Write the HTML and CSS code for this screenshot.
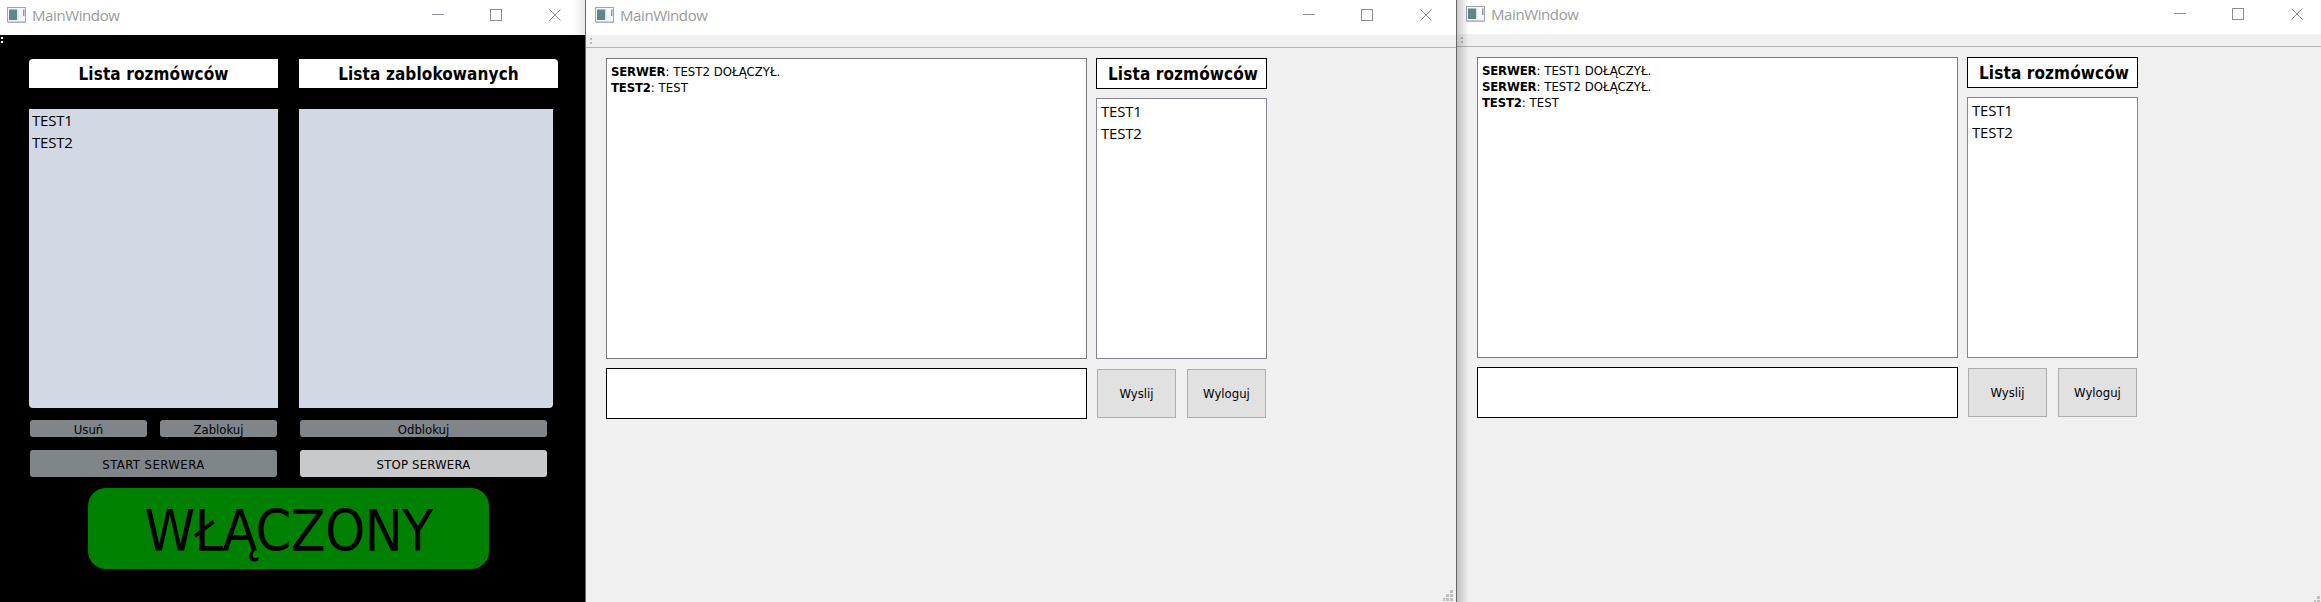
FILE: index.html
```html
<!DOCTYPE html>
<html lang="pl">
<head>
<meta charset="utf-8">
<title>MainWindow</title>
<link rel="stylesheet" href="styles.css">
</head>
<body>
<svg class="defs" width="0" height="0">
  <symbol id="app" viewBox="0 0 19 16">
    <rect x=".5" y=".5" width="18" height="14.5" fill="#f4f6f7" stroke="#a2a4ae"/>
    <rect x="2" y="2.500" width="8" height="10.500" fill="#5f8788"/>
    <rect x="10" y="2.500" width="1.500" height="10.500" fill="#dde2e8"/>
    <rect x="16" y="2.500" width="1.500" height="6.500" fill="#8d99a5"/>
    <path d="M1 15.500H18" stroke="#b4b4b8"/>
  </symbol>
  <symbol id="controls" viewBox="0 0 130 13">
    <g fill="none" stroke="#8a8f99">
      <path d="M0 5.500H12"/>
      <rect x="58.500" y=".5" width="11" height="11"/>
      <path d="M117.500 .5L128.500 11.500M128.500 .5L117.500 11.500"/>
    </g>
  </symbol>
</svg>
<main class="desktop">
  <section class="window server">
    <header class="titlebar">
      <svg class="app-icon"><use href="#app"/></svg>
      <h1>MainWindow</h1>
      <svg class="controls"><use href="#controls"/></svg>
    </header>
    <div class="toolbar"><i class="handle"></i></div>
    <div class="panel">
      <div class="column">
        <h2 class="caption first">Lista rozmówców</h2>
        <ul class="names first"><li>TEST1</li><li>TEST2</li></ul>
        <div class="row"><button>Usuń</button><button>Zablokuj</button></div>
        <button class="big start">START SERWERA</button>
      </div>
      <div class="column second">
        <h2 class="caption last">Lista zablokowanych</h2>
        <ul class="names last"></ul>
        <div class="row"><button>Odblokuj</button></div>
        <button class="big stop">STOP SERWERA</button>
      </div>
    </div>
    <div class="status"><span>WŁĄCZONY</span></div>
  </section>

  <section class="window client">
    <header class="titlebar">
      <svg class="app-icon"><use href="#app"/></svg>
      <h1>MainWindow</h1>
      <svg class="controls"><use href="#controls"/></svg>
    </header>
    <div class="toolbar"><i class="handle"></i></div>
    <div class="chat">
      <div class="log">
        <p><b>SERWER</b>: TEST2 DOŁĄCZYŁ.</p>
        <p><b>TEST2</b>: TEST</p>
      </div>
      <div class="people">
        <h2 class="label">Lista rozmówców</h2>
        <ul class="names"><li>TEST1</li><li>TEST2</li></ul>
      </div>
      <div class="message"></div>
      <div class="actions"><button>Wyslij</button><button>Wyloguj</button></div>
    </div>
    <svg class="grip" viewBox="0 0 10 11" fill="#bfbfbf"><path d="M7 0h3v3h-3zM3 4h3v3h-3zM7 4h3v3h-3zM0 8h2v3h-2zM3 8h3v3h-3zM7 8h3v3h-3z"/></svg>
  </section>

  <section class="window client raised">
    <header class="titlebar">
      <svg class="app-icon"><use href="#app"/></svg>
      <h1>MainWindow</h1>
      <svg class="controls"><use href="#controls"/></svg>
    </header>
    <div class="toolbar"><i class="handle"></i></div>
    <div class="chat">
      <div class="log">
        <p><b>SERWER</b>: TEST1 DOŁĄCZYŁ.</p>
        <p><b>SERWER</b>: TEST2 DOŁĄCZYŁ.</p>
        <p><b>TEST2</b>: TEST</p>
      </div>
      <div class="people">
        <h2 class="label">Lista rozmówców</h2>
        <ul class="names"><li>TEST1</li><li>TEST2</li></ul>
      </div>
      <div class="message"></div>
      <div class="actions"><button>Wyslij</button><button>Wyloguj</button></div>
    </div>
    <svg class="grip corner" viewBox="0 0 6 6" fill="#bfbfbf"><path d="M3 0h3v3h-3zM0 4h2v2h-2zM3 4h3v2h-3z"/></svg>
  </section>
</main>
</body>
</html>
```
FILE: styles.css
```css
* { box-sizing: border-box; margin: 0; padding: 0; }
body { overflow: hidden; background: #f0f0f0; color: #000; font: 13px/16px "DejaVu Sans Condensed", "DejaVu Sans", sans-serif; font-stretch: condensed; }
ul { list-style: none; }
button { border: 0; font: inherit; color: #000; }
.defs { position: absolute; }
.desktop { display: grid; grid-template-columns: 585px 871px 865px; height: 602px; }
.window { position: relative; overflow: hidden; height: 602px; background: #f0f0f0; }

.titlebar { display: flex; align-items: flex-start; height: 35px; padding: 7px 23px 0 7px; background: #fff; }
.app-icon { width: 19px; height: 16px; }
.titlebar h1 { margin: 0 auto 0 6px; font: 400 15px/16px "Open Sans", sans-serif; letter-spacing: -.4px; color: #999b99; }
.controls { width: 130px; height: 13px; margin-top: 2px; }

.server { background: #000; }
.server .titlebar { background: linear-gradient(to left, #e8e8e8, #fff 12px); }
.server .toolbar { height: 24px; padding: 2px 0 0 1px; }
.handle { display: block; width: 2px; height: 6px; border: solid #fff; border-width: 2px 0; }
.panel { display: flex; gap: 21px; padding-left: 29px; }
.column { width: 249px; }
.column.second { width: 259px; }
.caption { height: 29px; margin-bottom: 21px; background: #fff; font-size: 17px; line-height: 30px; letter-spacing: .12px; text-align: center; }
.caption.first { border-top-left-radius: 4px; }
.caption.last { border-top-right-radius: 4px; }
.names { font: 15px/22px "Open Sans", sans-serif; letter-spacing: -.2px; }
.server .names { height: 299px; padding: 0 3px; background: #d2d8e4; }
.server .names.first { border-bottom-left-radius: 4px; }
.server .names.last { width: 254px; border-bottom-right-radius: 4px; }
.row { display: flex; gap: 13px; width: 247px; margin: 12px 0 13px 1px; }
.row button { flex: 1; height: 17px; border-radius: 3px; background: #80858a; line-height: 19px; }
.big { display: block; width: 247px; height: 27px; margin-left: 1px; padding-top: 2px; border-radius: 3px; background: #80858a; letter-spacing: .45px; }
.big.stop { background: #c8c9cb; letter-spacing: .2px; }
.status { display: flex; justify-content: center; width: 401px; height: 81px; margin: 11px 0 0 88px; border-radius: 18px; background: #008000; font-size: 57px; line-height: 87px; letter-spacing: -.8px; }

.client { border-left: 1px solid #666; }
.client .titlebar { padding-left: 9px; }
.client .toolbar { height: 13px; padding: 3px 0 0 4px; border-bottom: 1px solid #b4b4b4; }
.client .handle { border-color: #bababa; }
.client .chat { display: grid; grid-template-columns: 481px 171px; grid-template-rows: 301px 51px; gap: 9px; padding: 10px 0 0 20px; }
.log { padding: 5px 4px; border: 1px solid #7a7a7a; background: #fff; letter-spacing: .05px; }
.log b { letter-spacing: -.15px; }
.people { display: flex; flex-direction: column; gap: 9px; }
.label { height: 31px; padding-left: 11px; border: 1px solid #000; background: #fff; font-size: 17px; line-height: 30px; letter-spacing: .12px; }
.client .names { flex: 1; padding: 1px 4px; border: 1px solid #828790; background: #fff; }
.message { border: 1px solid #000; background: #fff; }
.actions { display: flex; gap: 11px; padding: 1px; }
.actions button { flex: 1; padding-top: 1px; border: 1px solid #adadad; background: #e1e1e1; }
.grip { position: absolute; right: 3px; bottom: 1px; width: 10px; height: 11px; }
.grip.corner { right: 1px; bottom: 0; width: 6px; height: 6px; }

.raised::before { content: ""; position: absolute; inset: 0 auto 0 0; width: 12px; background: linear-gradient(to right, rgba(0,0,0,.2), rgba(0,0,0,0)); }
.raised .titlebar { height: 34px; padding: 6px 17px 0 9px; }
```
